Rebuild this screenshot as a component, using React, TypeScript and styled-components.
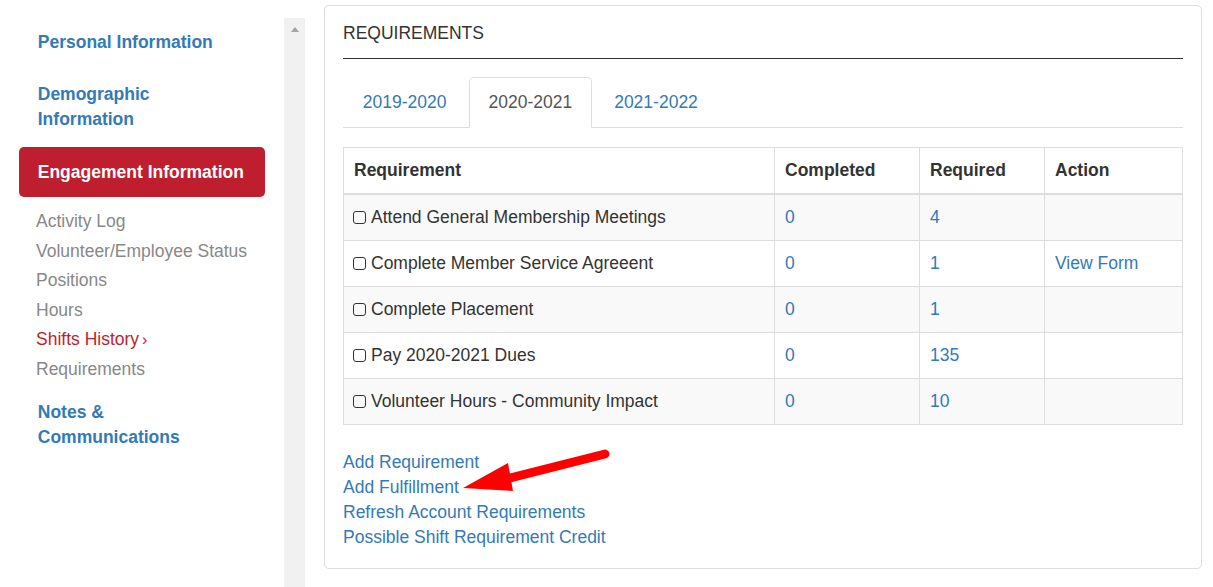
import styled, { createGlobalStyle } from "styled-components";

const GlobalStyle = createGlobalStyle`
  html, body {
    margin: 0;
    padding: 0;
    background: #ffffff;
  }
  body {
    font-family: "Liberation Sans", Arial, sans-serif;
    font-size: 17.5px;
    line-height: 25px;
    color: #333333;
  }
  * {
    box-sizing: border-box;
  }
`;

const Page = styled.div`
  display: flex;
  align-items: flex-start;
  width: 1213px;
  height: 587px;
  overflow: hidden;
`;

const Sidebar = styled.nav`
  width: 284px;
  flex-shrink: 0;
  padding: 17px 0 0 19px;
`;

const NavItem = styled.a<{ $active?: boolean }>`
  display: block;
  width: 246px;
  padding: 12.5px 18.75px;
  margin-top: 2.5px;
  border-radius: 5px;
  font-weight: bold;
  text-decoration: none;
  color: ${(p) => (p.$active ? "#ffffff" : "#337ab7")};
  background: ${(p) => (p.$active ? "#be1e2d" : "transparent")};

  &:first-child {
    margin-top: 0;
  }
`;

const SubList = styled.div`
  padding: 10px 0 0 17px;
`;

const SubItem = styled.a<{ $current?: boolean }>`
  display: block;
  line-height: 29.6px;
  text-decoration: none;
  color: ${(p) => (p.$current ? "#be1e2d" : "#888888")};
`;

const Chevron = styled.span`
  font-size: 16px;
  margin-left: 3px;
`;

const Scrollbar = styled.div`
  width: 21px;
  flex-shrink: 0;
  margin-top: 18px;
  height: 569px;
  background: #f1f1f1;
  display: flex;
  justify-content: center;
  padding-top: 9px;
`;

const ScrollArrow = styled.span`
  width: 0;
  height: 0;
  border-left: 4.5px solid transparent;
  border-right: 4.5px solid transparent;
  border-bottom: 5px solid #a3a3a3;
`;

const Panel = styled.section`
  width: 878px;
  margin: 5px 0 0 19px;
  border: 1px solid #dddddd;
  border-radius: 5px;
  padding: 15px 18px 18px;
`;

const PanelTitle = styled.h4`
  margin: 0;
  font-size: 17.5px;
  font-weight: normal;
  line-height: 25px;
  padding-bottom: 12px;
  border-bottom: 1px solid #333333;
`;

const Tabs = styled.div`
  display: flex;
  margin-top: 18px;
  border-bottom: 1px solid #dddddd;
`;

const Tab = styled.a<{ $active?: boolean }>`
  display: block;
  padding: 12px 18.75px;
  margin-right: 2.5px;
  margin-bottom: -1px;
  border: 1px solid ${(p) => (p.$active ? "#dddddd" : "transparent")};
  border-bottom-color: transparent;
  border-radius: 5px 5px 0 0;
  background: ${(p) => (p.$active ? "#ffffff" : "transparent")};
  text-decoration: none;
  color: ${(p) => (p.$active ? "#555555" : "#337ab7")};
`;

const Table = styled.table`
  width: 100%;
  margin-top: 19px;
  border-collapse: collapse;
  table-layout: fixed;
  border: 1px solid #dddddd;
`;

const Th = styled.th`
  text-align: left;
  font-weight: bold;
  padding: 10px;
  line-height: 25px;
  border: 1px solid #dddddd;
  border-bottom-width: 2px;
`;

const Row = styled.tr<{ $striped?: boolean }>`
  background: ${(p) => (p.$striped ? "#f9f9f9" : "#ffffff")};
`;

const Td = styled.td`
  padding: 10px;
  line-height: 25px;
  border: 1px solid #dddddd;
  white-space: nowrap;
`;

const Box = styled.span`
  display: inline-block;
  width: 13px;
  height: 13px;
  border: 1.5px solid #333333;
  border-radius: 3px;
  margin: 0 5px 0 -1px;
  vertical-align: -1px;
`;

const Link = styled.a`
  color: #337ab7;
  text-decoration: none;
`;

const Actions = styled.div`
  position: relative;
  margin-top: 25px;
`;

const ActionLink = styled.a`
  display: block;
  width: max-content;
  color: #337ab7;
  text-decoration: none;
  line-height: 25px;
`;

const Arrow = styled.svg`
  position: absolute;
  left: 112px;
  top: -9px;
`;

const rows = [
  { name: "Attend General Membership Meetings", done: "0", need: "4", action: "" },
  { name: "Complete Member Service Agreeent", done: "0", need: "1", action: "View Form" },
  { name: "Complete Placement", done: "0", need: "1", action: "" },
  { name: "Pay 2020-2021 Dues", done: "0", need: "135", action: "" },
  { name: "Volunteer Hours - Community Impact", done: "0", need: "10", action: "" },
];

export default function App() {
  return (
    <Page>
      <GlobalStyle />
      <Sidebar>
        <NavItem>Personal Information</NavItem>
        <NavItem>
          Demographic
          <br />
          Information
        </NavItem>
        <NavItem $active>Engagement Information</NavItem>
        <SubList>
          <SubItem>Activity Log</SubItem>
          <SubItem>Volunteer/Employee Status</SubItem>
          <SubItem>Positions</SubItem>
          <SubItem>Hours</SubItem>
          <SubItem $current>
            Shifts History<Chevron>›</Chevron>
          </SubItem>
          <SubItem>Requirements</SubItem>
        </SubList>
        <NavItem>
          Notes &amp;
          <br />
          Communications
        </NavItem>
      </Sidebar>
      <Scrollbar>
        <ScrollArrow />
      </Scrollbar>
      <Panel>
        <PanelTitle>REQUIREMENTS</PanelTitle>
        <Tabs>
          <Tab>2019-2020</Tab>
          <Tab $active>2020-2021</Tab>
          <Tab>2021-2022</Tab>
        </Tabs>
        <Table>
          <colgroup>
            <col />
            <col style={{ width: 145 }} />
            <col style={{ width: 125 }} />
            <col style={{ width: 138 }} />
          </colgroup>
          <thead>
            <tr>
              <Th>Requirement</Th>
              <Th>Completed</Th>
              <Th>Required</Th>
              <Th>Action</Th>
            </tr>
          </thead>
          <tbody>
            {rows.map((r, i) => (
              <Row key={r.name} $striped={i % 2 === 0}>
                <Td>
                  <Box />
                  {r.name}
                </Td>
                <Td>
                  <Link>{r.done}</Link>
                </Td>
                <Td>
                  <Link>{r.need}</Link>
                </Td>
                <Td>{r.action && <Link>{r.action}</Link>}</Td>
              </Row>
            ))}
          </tbody>
        </Table>
        <Actions>
          <ActionLink>Add Requirement</ActionLink>
          <ActionLink>Add Fulfillment</ActionLink>
          <ActionLink>Refresh Account Requirements</ActionLink>
          <ActionLink>Possible Shift Requirement Credit</ActionLink>
          <Arrow width="165" height="60" viewBox="0 0 165 60">
            <line x1="55" y1="37" x2="150" y2="13" stroke="#ff0000" strokeWidth="9" strokeLinecap="round" />
            <polygon points="8,47 53,22 58,50" fill="#ff0000" />
          </Arrow>
        </Actions>
      </Panel>
    </Page>
  );
}
